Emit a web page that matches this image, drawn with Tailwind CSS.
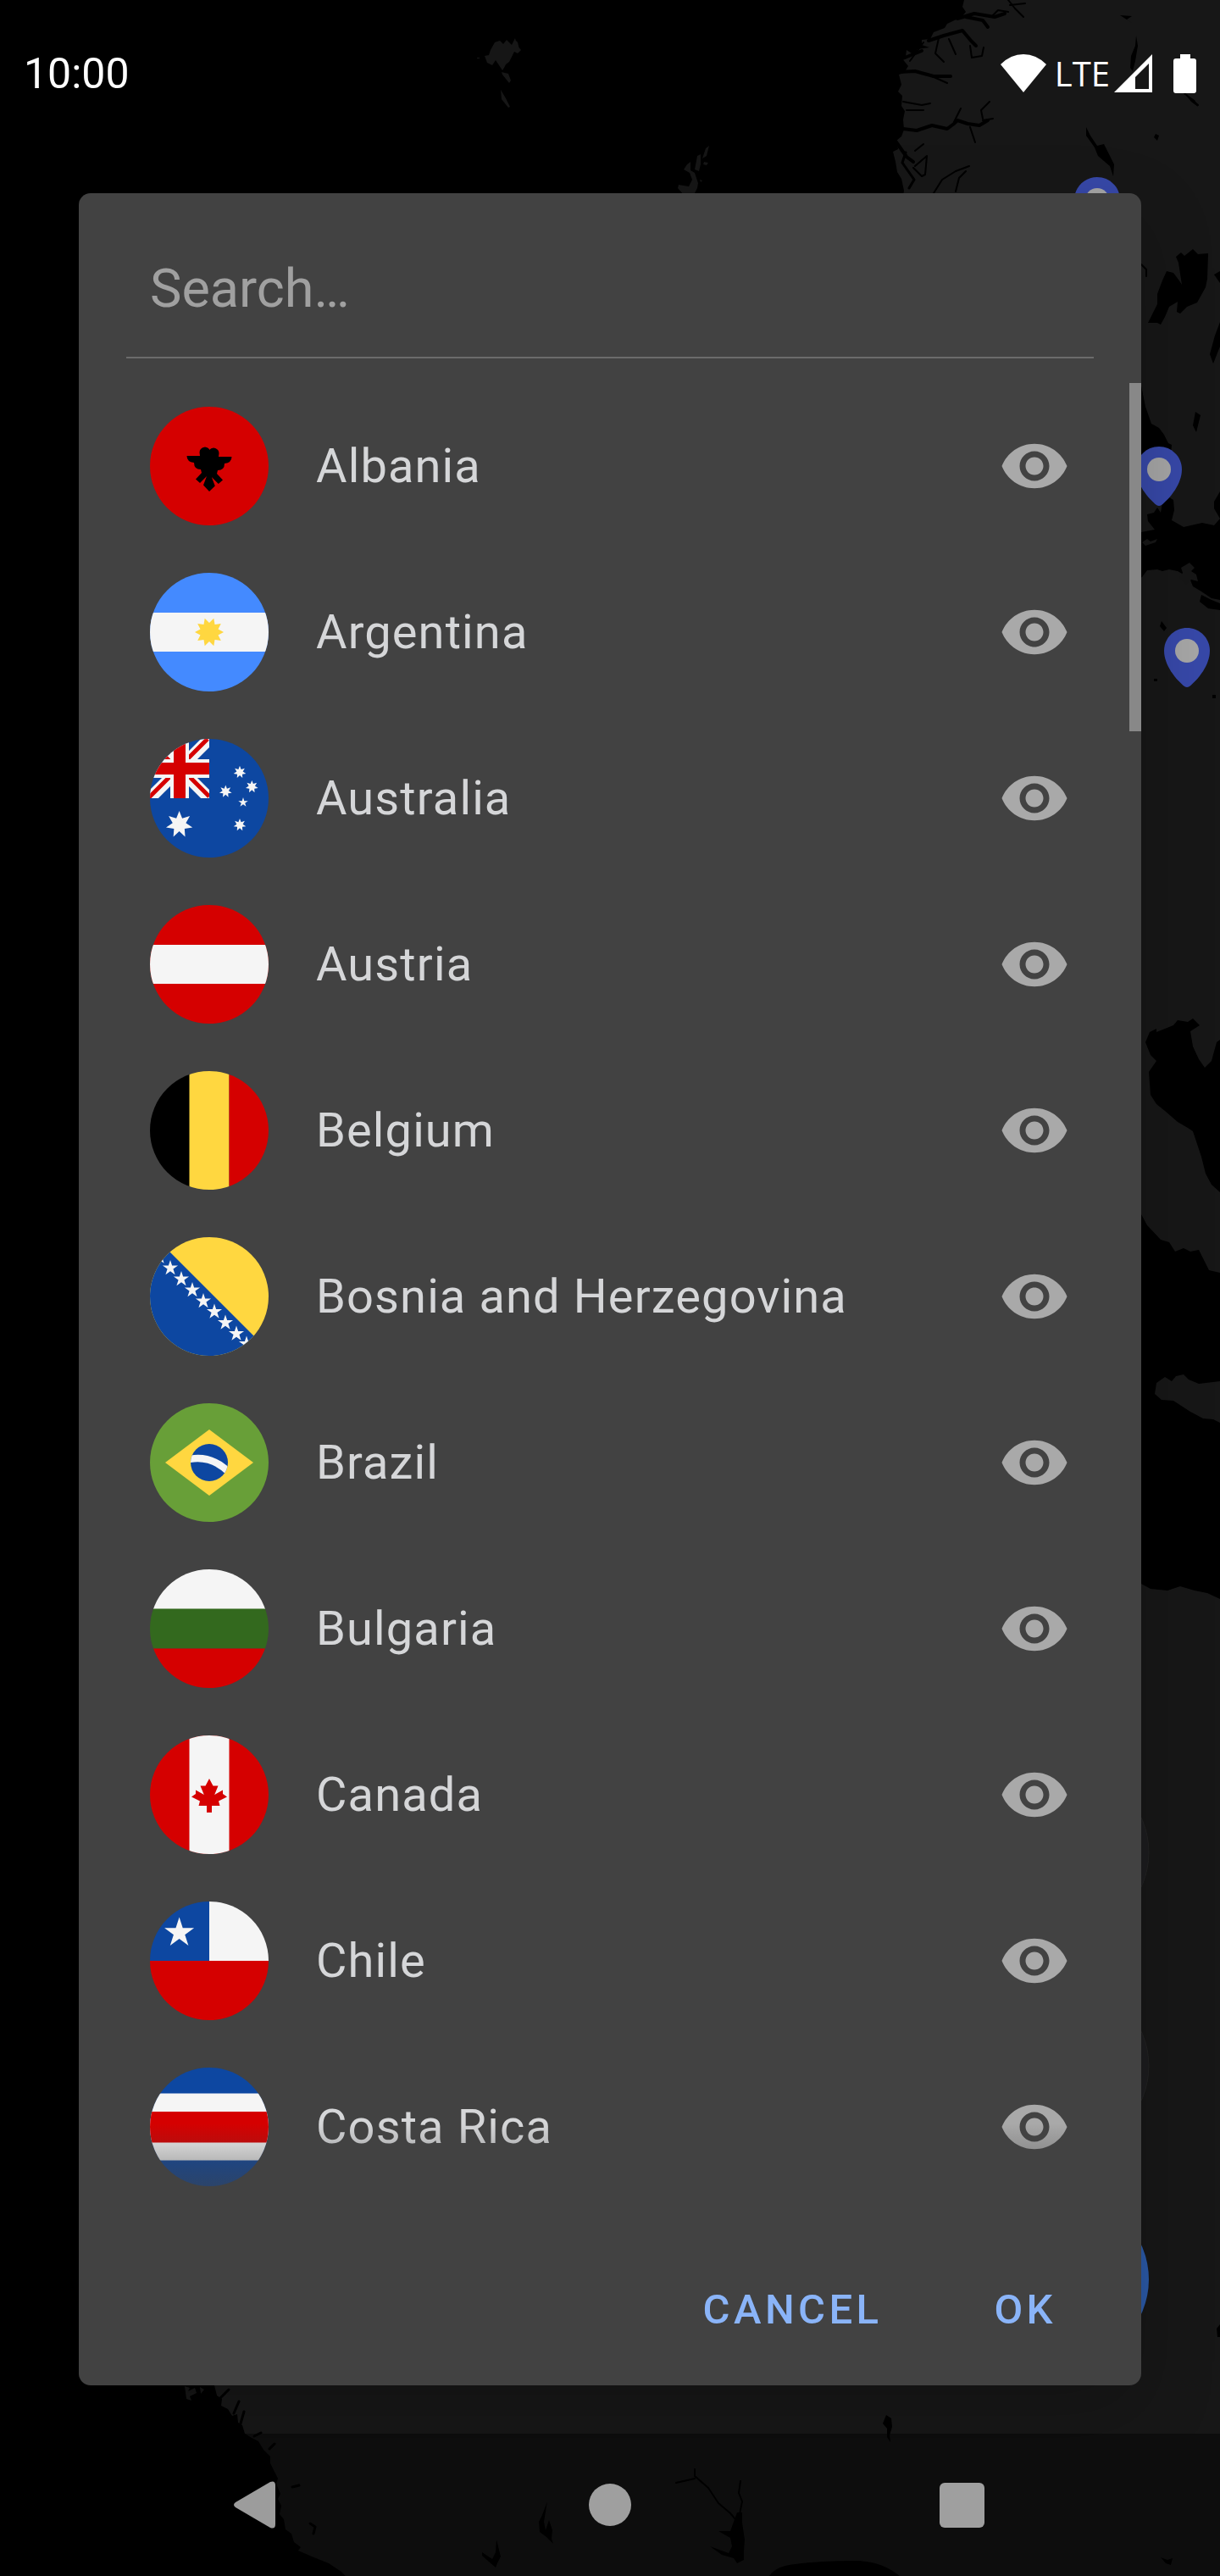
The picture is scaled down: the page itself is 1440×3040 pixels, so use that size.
<!DOCTYPE html>
<html lang="en">
<head>
<meta charset="utf-8">
<meta name="viewport" content="width=device-width, initial-scale=1">
<title>Select countries</title>
<script src="https://cdn.jsdelivr.net/npm/@tailwindcss/browser@4"></script>
</head>
<body class="relative flex min-h-screen flex-col overflow-x-hidden bg-black font-[Roboto,sans-serif]">

<!-- Shared shapes -->
<svg class="absolute size-0" aria-hidden="true">
  <defs>
    <symbol id="eye" viewBox="0 0 24 24"><path fill="currentColor" d="M12 4.5C7 4.500 2.730 7.610 1 12c1.730 4.390 6 7.500 11 7.500s9.270-3.110 11-7.500c-1.730-4.390-6-7.500-11-7.500zM12 17c-2.760 0-5-2.240-5-5s2.240-5 5-5 5 2.240 5 5-2.240 5-5 5zm0-8c-1.660 0-3 1.340-3 3s1.340 3 3 3 3-1.340 3-3-1.340-3-3-3z"/></symbol>
    <polygon id="star5" points="0,-1 .2245,-.309 .951,-.309 .363,.118 .588,.809 0,.382 -.588,.809 -.363,.118 -.951,-.309 -.2245,-.309"/>
    <polygon id="star7" points="0,-1 .217,-.45 .782,-.623 .488,-.111 .975,.223 .391,.312 .434,.901 0,.5 -.434,.901 -.391,.312 -.975,.223 -.488,-.111 -.782,-.623 -.217,-.45"/>
    <g id="pin">
      <path fill="#3748a8" d="M0 0C-15 0-27 12-27 27c0 17 14 34 24 42q3 2 6 0C13 61 27 44 27 27 27 12 15 0 0 0z"/>
      <circle cy="27" r="14" fill="#a6a6a6"/>
    </g>
  </defs>
</svg>

<!-- Map -->
<svg class="absolute inset-0 h-full w-full" viewBox="0 0 1440 3040" preserveAspectRatio="xMaxYMid slice" aria-hidden="true">
  <g fill="#171717">
    <path d="M1138 0l-2 8 4 6-5 6-17 8-3 5-13 5-4 8-10 1v6l9 3-14 2-4 7-9-6-1 8-5 1 8 10-5 8-6 2 3 12-4 8 5 5-1 12 4 6-2 10 1 12-3 8-6 5 2 10-6 3 3 12 2 12 5 8 3 14-2 10 6 12H1440V0z"/>
    <path d="M1300 240h140v1700h-140z"/>
    <path d="M1440 1887H200V2815h53l3 12 6 4-1 8 8 4 5 8 6-2 1 10 5 3 3 10 8 5 8 4 6 10 8 8 0 8 5 10 4 8-2 6 5 12-3 6 4 8-2 10 5 6 2 12 7 5 3 10 8 6-3 4 16 7 20 8 15 10 12 13 18 10 7 9 13 6 10 7H1440z"/>
  </g>
  <!-- Seas and lakes -->
  <g fill="#000">
    <path d="M1300 440h47v15l5 25 7 20 9 5 6 8 5 10 4 2-1 10h-14l-22 4h-46z"/>
    <path d="M1300 640l47-12 16-3-8-10-1-8 8-2 4-6 4 6 2-12 8-6 5 3 1 12-3 12 14 8 22-5 14 3 7-8-7-12v-8l7-12v128l-10-2-12-8-10-6-4-10-14-8-10-2-8 2-6-2-12 1-6 8-12 7-47 20z"/>
    <path d="M1352 1230l5-12 8-4v4l20-8 5-6 12 2 6-4 8 8-11 7 3 18 7 15 7 10 8-8 6-22 4-3v180l-10-9-7-13-5-20-10-30-6-4-12-7-15-13-10-8-7-11-2-27 9-13-7-7z"/>
    <path d="M1347 1433l7 13 16 17 10 3 7 11 10-4 8 4 10-2 5 10 7 14 13 3v128l-25 3-12-5-6-6-9 2-5 6-8-5-10 7-2 13 8 7 14 1 20 13 15 8 12 1 8 4v208l-15-7-15-3-17-5-15 5-20-2-11-6z"/>
    <path d="M1388 303l6-5 4 4 10-8 6 6 12-1-1 30-2 10-10 18-12 5-8 8-4-2 1-12-10 6-5 12-5 9-4-2-11 0 6-12 5-10v-12l6-16 5-11 8 2 6 8 4 6-4-26z"/>
    <path d="M1440 380l-6 16-6 22 4 11 8-20zM1433 324l7-4v14zM1411 486l6 4-5 20-4-8z"/>
    <path d="M1341 42l2 12-3 18-3 12-3-4 1-14 5-12zM1282 150l5 10 8 12 8-2 6 12 6 12-1 14-4-12-14-12-4-10-10-14zM1364 158l4 2-2 6-4-4zM1322 18l14 1-6 4 6 4zM1398 110l12 8 4 8-8-6z"/>
    <path d="M1371 733l6 8-3 4-5-6zM1418 702l12 6 10 4v8l-14-2-10-8zM1362 801h4v3h-4zM1431 820h4v4h-4z"/>
    <path d="M1046 2850l6 4 1 10-3 10 1 8-4-6v-10l-5-6zM1436 2748l4-5v15h-3zM908 3040q8-12 30-14 30-4 72-4 30 0 52 18zM1370 3018l8 3 6-2-2 8-6-2z"/>
    <path d="M870 2965l6 0v12l3 20-1 14 0 10-8 4-4-6-14-4-14-10 22 8 4-8-2-10-14-8 14 0zM646 2952l-4 24 2 10 4-12 4 12-1 10 2 6-8-8-8-6-1-12 4-8zM586 2997l5 20-4 8-2 5-16-14v-4l12 8 4-8z"/>
  </g>
  <!-- Fjords and rivers -->
  <g fill="none" stroke="#000" stroke-linejoin="round" stroke-linecap="round">
    <path stroke-width="4" d="M1130 22l20-6 24 4 12-4M1140 20l20 4 6 8M1096 48l18-6 22-6 10 12 6 6M1088 60l-30 12M1052 158l14-6 16 2 18-6 18 4 8-6 4-4 12 4 14 2 10-6M1056 165l14 20 8 6M1060 85l20-1 22 6 20 0"/>
    <path stroke-width="2" d="M1190 0l8 10 10 10M1192 6l18-2M1145 54l2 14 12-2 2-10M1120 46l8 18M1126 144l8-16M1160 140l-2-10 10-10M1160 142l12-2M1145 150l6 18M1108 45l-4 18 10 10M1090 50l-16 22M1066 120l22 4 10-2M1070 130h20M1102 228l10-16 16-10 16-6M1128 226l4-16 8-8M1080 196l14-12-2 22-4 2-10-10M1068 80l-8-14M1100 90l18 8M1170 20l8-8 12 2M1090 170l-10 8M1398 110l16 14M820 2914v8l16 14 12 18 14 12 12 14M798 2930l22-5M874 2928l-2 14 4 10-4 20M1347 312l6 6 0 8"/>
    <path stroke-width="3" d="M1069 180l-4 12 14 20-6 10M366 2978l6 4-2 8M260 2830l10-10M276 2848l6-14M284 2860l4-14M300 2875l8-4M318 2890l6-6M345 2935l8-2"/>
  </g>
  <!-- Small islands -->
  <g fill="#161616">
    <path d="M572 66l5-1 2-6 5-9 6-2 4 4 4-5 6 6 4-8 2 8 5 6-4 4-4-2-6 12-4 3-2 4-2 3-8-12-4 6-6-3zM592 85l8 2 3 8-2 3-8-10zM591 106l6 10 5 10-2 1-8-10zM563 68h3v1h-3zM607 46l4 4 2 8-4-3z"/>
    <path d="M833 175l4-3-3 12-5 3zM823 184l4-2 0 12-2 8-5-2zM831 191l5 1-2 3-4-1zM811 194l4-3v10l5 3 4 12-1 6-4 8h-12l-7-8 1-4 12 2 4-8-3-8-7-4zM826 212l3 1-2 2z"/>
    <path d="M218 2816l6 2-2 4 8-4 2 6-8 4 2 5-6-2zM236 2817l5 3-4 5z"/>
    <path d="M1394 670l10-6 6 6-4 4 6 4 2 8-8-2-6 6-8-8 4-6zM1348 640l6-4 4 3 8-3-2 4-12 4z"/>
  </g>
  <use href="#pin" x="1295" y="209"/>
  <use href="#pin" x="1368" y="527"/>
  <use href="#pin" x="1401" y="741"/>
  <!-- Floating map buttons -->
  <g stroke="#232323" stroke-width="1" fill="#1c1c1e">
    <circle cx="1258" cy="2186" r="98"/>
    <circle cx="1258" cy="2438" r="98"/>
  </g>
  <circle cx="1258" cy="2690" r="98" fill="#2b59a6"/>
</svg>

<!-- Status bar -->
<header class="relative flex h-[174px] shrink-0 items-center justify-between px-7 text-white">
  <time class="text-[50px]">10:00</time>
  <div class="flex items-center">
    <svg class="h-[46px] w-[54px]" viewBox="0 0 54 46" role="img" aria-label="Wi-Fi"><path fill="#fff" d="M0 12Q12 0 27 0t27 12L27 45z"/></svg>
    <span class="ml-[10px] font-['Open_Sans',sans-serif] text-[40px]">LTE</span>
    <svg class="ml-[5px] h-[46px] w-[46px]" viewBox="0 0 46 46" role="img" aria-label="Signal"><path fill="#fff" fill-rule="evenodd" d="M45 0v45H0zM41 11L25 27v14h16z"/></svg>
    <svg class="ml-6 h-[46px] w-[27px]" viewBox="0 0 27 46" role="img" aria-label="Battery"><path fill="#fff" d="M8 0h12v5h4q3 0 3 3v35q0 3-3 3H3q-3 0-3-3V8q0-3 3-3h5z"/></svg>
  </div>
</header>

<!-- Country dialog -->
<main class="relative mt-[54px] px-[93px]">
  <section role="dialog" aria-label="Select countries" class="overflow-hidden rounded-[14px] bg-[#424242] shadow-[0_30px_90px_rgba(0,0,0,0.2)]">
    <div class="px-14 pt-[27px] pb-[29px]">
      <input type="text" aria-label="Search countries" placeholder="Search…" class="block h-[168px] w-full border-b-2 border-[#6b6b6b] bg-transparent px-7 pt-1 text-[63px] text-[#d5d6d8] outline-none placeholder:text-[#a0a0a0]">
    </div>

    <div class="relative">
      <ul class="pb-[26px] text-[56px] tracking-[0.02em] text-[#d5d6d8]">
        <li class="flex h-[196px] items-center gap-14 px-[84px]">
          <svg class="size-[140px] shrink-0 rounded-full" viewBox="0 0 140 140" aria-hidden="true"><path fill="#d50000" d="M0 0h140v140H0z"/><path d="M70 50q-2-2.500-5-2.500-6.500 1-6.500 6.500l.5 4H43.500q0 7 8.500 8 0 8 8 8l1 4-7 7.500 5 4.500 8-8-4 10.500L70 100l6.800-6.500-4-10.500 8 8 5.200-4.500-7-7.500 1-4q8 0 8-8 8.500-1 8.500-8H81l.5-4q0-5.500-6.500-6.500-3 0-5 2.500z"/></svg>
          <span class="flex-1">Albania</span>
          <button type="button" aria-label="Toggle Albania" class="text-[#a9a9a9]"><svg class="size-[84px]"><use href="#eye"/></svg></button>
        </li>
        <li class="flex h-[196px] items-center gap-14 px-[84px]">
          <svg class="size-[140px] shrink-0 rounded-full" viewBox="0 0 140 140" aria-hidden="true"><path fill="#448aff" d="M0 0h140v140H0z"/><path fill="#f5f5f5" d="M0 47h140v46H0z"/><polygon fill="#ffd740" transform="translate(70 70)" points="17,0 10.5,3.4 13.8,10 6.5,8.900 5.300,16.200 0,11 -5.300,16.200 -6.500,8.900 -13.800,10 -10.500,3.400 -17,0 -10.500,-3.400 -13.800,-10 -6.500,-8.900 -5.300,-16.200 0,-11 5.300,-16.200 6.500,-8.900 13.800,-10 10.500,-3.400"/></svg>
          <span class="flex-1">Argentina</span>
          <button type="button" aria-label="Toggle Argentina" class="text-[#a9a9a9]"><svg class="size-[84px]"><use href="#eye"/></svg></button>
        </li>
        <li class="flex h-[196px] items-center gap-14 px-[84px]">
          <svg class="size-[140px] shrink-0 rounded-full" viewBox="0 0 140 140" aria-hidden="true">
            <path fill="#0d47a1" d="M0 0h140v140H0z"/>
            <svg width="70" height="70" viewBox="0 0 70 70">
              <path stroke="#f5f5f5" stroke-width="14" d="M0 0l70 70M70 0L0 70"/>
              <path stroke="#d50000" stroke-width="5" d="M0 3l30 30M40 38l30 30M68 0L38 30M32 36L-2 70"/>
              <path fill="#f5f5f5" d="M24 0h22v24h24v22H46v24H24V46H0V24h24z"/>
              <path fill="#d50000" d="M28 0h14v28h28v14H42v28H28V42H0V28h28z"/>
            </svg>
            <g fill="#f5f5f5">
              <use href="#star7" transform="translate(34.600 101) scale(16)"/>
              <use href="#star7" transform="translate(106 39.300) scale(7.500)"/>
              <use href="#star7" transform="translate(120.300 56.400) scale(7.500)"/>
              <use href="#star7" transform="translate(89.300 62) scale(7.500)"/>
              <use href="#star5" transform="translate(110 75) scale(6)"/>
              <use href="#star7" transform="translate(106 101.500) scale(7.500)"/>
            </g>
          </svg>
          <span class="flex-1">Australia</span>
          <button type="button" aria-label="Toggle Australia" class="text-[#a9a9a9]"><svg class="size-[84px]"><use href="#eye"/></svg></button>
        </li>
        <li class="flex h-[196px] items-center gap-14 px-[84px]">
          <svg class="size-[140px] shrink-0 rounded-full" viewBox="0 0 140 140" aria-hidden="true"><path fill="#d50000" d="M0 0h140v140H0z"/><path fill="#f5f5f5" d="M0 47h140v46H0z"/></svg>
          <span class="flex-1">Austria</span>
          <button type="button" aria-label="Toggle Austria" class="text-[#a9a9a9]"><svg class="size-[84px]"><use href="#eye"/></svg></button>
        </li>
        <li class="flex h-[196px] items-center gap-14 px-[84px]">
          <svg class="size-[140px] shrink-0 rounded-full" viewBox="0 0 140 140" aria-hidden="true"><path d="M0 0h47v140H0z"/><path fill="#ffd740" d="M46.500 0h47v140h-47z"/><path fill="#d50000" d="M93.500 0H140v140H93.500z"/></svg>
          <span class="flex-1">Belgium</span>
          <button type="button" aria-label="Toggle Belgium" class="text-[#a9a9a9]"><svg class="size-[84px]"><use href="#eye"/></svg></button>
        </li>
        <li class="flex h-[196px] items-center gap-14 px-[84px]">
          <svg class="size-[140px] shrink-0 rounded-full" viewBox="0 0 140 140" aria-hidden="true">
            <path fill="#ffd740" d="M0 0h140v140H0z"/><path fill="#0d47a1" d="M0-6l146 146H0z"/>
            <g fill="#f5f5f5">
              <use href="#star5" transform="translate(11 23) scale(9.500)"/>
              <use href="#star5" transform="translate(24 36.500) scale(9.500)"/>
              <use href="#star5" transform="translate(37 49.500) scale(9.500)"/>
              <use href="#star5" transform="translate(50 62.500) scale(9.500)"/>
              <use href="#star5" transform="translate(63 75.500) scale(9.500)"/>
              <use href="#star5" transform="translate(76 88) scale(9.500)"/>
              <use href="#star5" transform="translate(89 101) scale(9.500)"/>
              <use href="#star5" transform="translate(102 114) scale(9.500)"/>
              <use href="#star5" transform="translate(114 126) scale(9.500)"/>
            </g>
          </svg>
          <span class="flex-1">Bosnia and Herzegovina</span>
          <button type="button" aria-label="Toggle Bosnia and Herzegovina" class="text-[#a9a9a9]"><svg class="size-[84px]"><use href="#eye"/></svg></button>
        </li>
        <li class="flex h-[196px] items-center gap-14 px-[84px]">
          <svg class="size-[140px] shrink-0 rounded-full" viewBox="0 0 140 140" aria-hidden="true">
            <clipPath id="globe"><circle cx="70" cy="70" r="22"/></clipPath>
            <path fill="#689f38" d="M0 0h140v140H0z"/><path fill="#ffd740" d="M70 31l52 39-52 39-52-39z"/><circle cx="70" cy="70" r="22" fill="#0d47a1"/>
            <path clip-path="url(#globe)" fill="none" stroke="#f5f5f5" stroke-width="8.500" d="M44 66.500Q72 60 94 82"/>
          </svg>
          <span class="flex-1">Brazil</span>
          <button type="button" aria-label="Toggle Brazil" class="text-[#a9a9a9]"><svg class="size-[84px]"><use href="#eye"/></svg></button>
        </li>
        <li class="flex h-[196px] items-center gap-14 px-[84px]">
          <svg class="size-[140px] shrink-0 rounded-full" viewBox="0 0 140 140" aria-hidden="true"><path fill="#f5f5f5" d="M0 0h140v47H0z"/><path fill="#33691e" d="M0 46.500h140v47H0z"/><path fill="#d50000" d="M0 93.500h140V140H0z"/></svg>
          <span class="flex-1">Bulgaria</span>
          <button type="button" aria-label="Toggle Bulgaria" class="text-[#a9a9a9]"><svg class="size-[84px]"><use href="#eye"/></svg></button>
        </li>
        <li class="flex h-[196px] items-center gap-14 px-[84px]">
          <svg class="size-[140px] shrink-0 rounded-full" viewBox="0 0 140 140" aria-hidden="true"><path fill="#d50000" d="M0 0h140v140H0z"/><path fill="#f5f5f5" d="M46.500 0h47v140h-47z"/><path fill="#d50000" d="M70 51l-4.500 8.500h-6L63.800 70 54 64.500v4.500l-5 3.600L59 77.500 57.500 83H67v8h6v-8h9.500L81 77.500l10-4.900-5-3.600v-4.500L76.200 70l4.300-10.500h-6z"/></svg>
          <span class="flex-1">Canada</span>
          <button type="button" aria-label="Toggle Canada" class="text-[#a9a9a9]"><svg class="size-[84px]"><use href="#eye"/></svg></button>
        </li>
        <li class="flex h-[196px] items-center gap-14 px-[84px]">
          <svg class="size-[140px] shrink-0 rounded-full" viewBox="0 0 140 140" aria-hidden="true"><path fill="#d50000" d="M0 70h140v70H0z"/><path fill="#0d47a1" d="M0 0h70v70H0z"/><path fill="#f5f5f5" d="M70 0h70v70H70z"/><use href="#star5" fill="#f5f5f5" transform="translate(34.600 37) scale(18.400)"/></svg>
          <span class="flex-1">Chile</span>
          <button type="button" aria-label="Toggle Chile" class="text-[#a9a9a9]"><svg class="size-[84px]"><use href="#eye"/></svg></button>
        </li>
        <li class="flex h-[196px] items-center gap-14 px-[84px]">
          <svg class="size-[140px] shrink-0 rounded-full" viewBox="0 0 140 140" aria-hidden="true"><path fill="#0d47a1" d="M0 0h140v140H0z"/><path fill="#f5f5f5" d="M0 30.500h140v79H0z"/><path fill="#d50000" d="M0 52h140v36.500H0z"/></svg>
          <span class="flex-1">Costa Rica</span>
          <button type="button" aria-label="Toggle Costa Rica" class="text-[#a9a9a9]"><svg class="size-[84px]"><use href="#eye"/></svg></button>
        </li>
      </ul>
      <div class="pointer-events-none absolute inset-x-0 bottom-0 h-32 bg-linear-to-b from-[#424242]/0 to-[#424242]"></div>
      <div class="absolute top-0 right-0 h-[411px] w-[14px] bg-[#888888]"></div>
    </div>

    <div class="flex h-[181px] justify-end gap-7 px-[48px] pt-[29px] text-[49px] font-medium tracking-[0.09em] text-[#8ab4f8]">
      <button type="button" class="h-[126px] px-[52px]">CANCEL</button>
      <button type="button" class="h-[126px] px-[52px]">OK</button>
    </div>
  </section>
</main>

<!-- Navigation bar -->
<nav class="relative mt-auto grid h-[168px] shrink-0 grid-cols-3 bg-black/40 px-[97px]">
  <button type="button" aria-label="Back" class="flex items-center justify-center"><svg class="h-14 w-[58px]" viewBox="0 0 58 56"><path fill="#9c9c9c" d="M43 1q6-2 6 4v46q0 6-6 4L2 31q-4-3 0-6z"/></svg></button>
  <button type="button" aria-label="Home" class="flex items-center justify-center"><span class="size-[50px] rounded-full bg-[#9f9f9f]"></span></button>
  <button type="button" aria-label="Recent apps" class="flex items-center justify-center"><span class="size-[53px] rounded-[6px] bg-[#9f9f9f]"></span></button>
</nav>
</body>
</html>
